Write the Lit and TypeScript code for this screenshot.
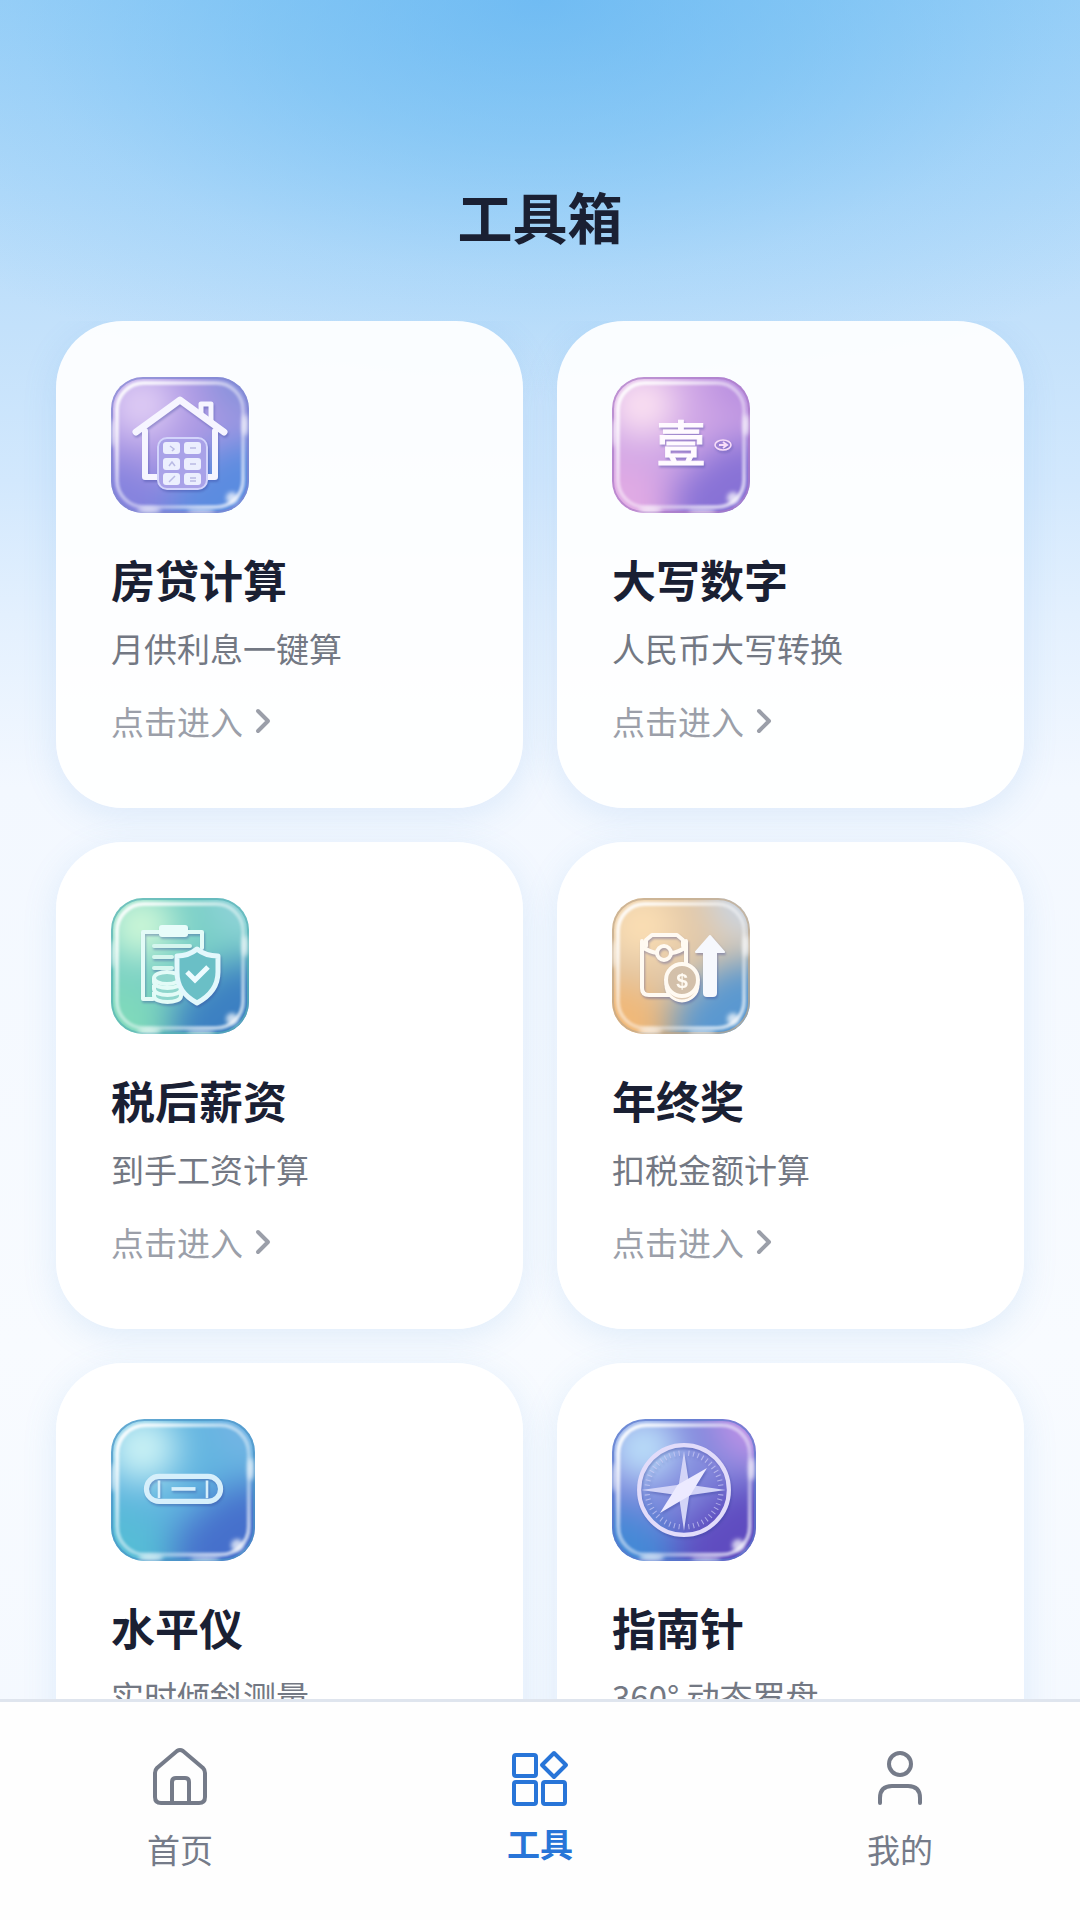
import { LitElement, html, svg, css } from "lit";
import { customElement, property } from "lit/decorators.js";

interface Tool { id: string; name: string; desc: string; big?: boolean; }

const TOOLS: Tool[] = [
  { id: "house", name: "房贷计算", desc: "月供利息一键算" },
  { id: "caps", name: "大写数字", desc: "人民币大写转换" },
  { id: "tax", name: "税后薪资", desc: "到手工资计算" },
  { id: "bonus", name: "年终奖", desc: "扣税金额计算" },
  { id: "level", name: "水平仪", desc: "实时倾斜测量", big: true },
  { id: "compass", name: "指南针", desc: "360° 动态罗盘", big: true },
];

/* Colours of each glass tile: middle, top left, top right, bottom left, bottom right, rim */
const TILES: Record<string, string[]> = {
  house: ["#ae9ae4", "#e0cdf5", "#8792dc", "#8583de", "#5b8ce0", "#8088d2"],
  caps: ["#cfa6e6", "#fce2f2", "#b990e0", "#e0aae4", "#8872d6", "#ab7cc8"],
  tax: ["#79cfc6", "#cff8d8", "#8fd2d8", "#7fd9bb", "#3c80c2", "#5ab2b6"],
  bonus: ["#e2c8a8", "#fcdfb4", "#c9d4e2", "#f0b878", "#5a98d0", "#bfa88c"],
  level: ["#62b5e0", "#cef4f6", "#74b4e4", "#56bcd6", "#4670cc", "#4c94c6"],
  compass: ["#8088dc", "#bce0fa", "#bc90e6", "#4489d6", "#5f4cc0", "#5a78cc"],
};

const compassTicks = Array.from({ length: 48 }, (_, i) => i).filter((i) => i % 12 !== 0);

function glyph(id: string) {
  switch (id) {
    case "house":
      return svg`
        <g fill="none" stroke="#f6f5ff" stroke-linejoin="round" stroke-linecap="round">
          <path d="M25 55 L69 23 L113 55" stroke-width="7"/>
          <path d="M90 36 V27 H100 V45" stroke-width="5"/>
          <path d="M34 54 V100 H104 V54" stroke-width="6"/>
        </g>
        <rect x="47" y="61" width="49" height="51" rx="9" fill="#a9a2e8" stroke="#d3d4fb" stroke-width="2"/>
        <g fill="#eceffe">
          <rect x="52" y="65" width="17" height="12" rx="3"/><rect x="73" y="65" width="17" height="12" rx="3"/>
          <rect x="52" y="81" width="17" height="12" rx="3"/><rect x="73" y="81" width="17" height="12" rx="3"/>
          <rect x="52" y="96" width="17" height="12" rx="3"/><rect x="73" y="96" width="17" height="12" rx="3"/>
        </g>
        <path fill="none" stroke="#b9bae4" stroke-width="1.5" d="M59 69l4 3-2 2M79 71h6M58 89l3-4 3 4M79 87h6M58 105l6-6M79 101h6M79 104h6"/>`;
    case "caps":
      return svg`
        <text class="glyph" x="69" y="85" text-anchor="middle">壹</text>
        <g fill="none" stroke="#f8ddf8" stroke-width="1.6">
          <ellipse cx="111" cy="68" rx="8" ry="5"/>
          <path d="M107 68h7M111 65l4 3-4 3" stroke-width="2"/>
        </g>`;
    case "tax":
      return svg`
        <path d="M48 34 H32 V101 H42 M76 34 H91 V50" fill="none" stroke="#e3fbf7" stroke-width="4" stroke-linejoin="round" stroke-linecap="round"/>
        <path d="M43 48h36M43 59h18M43 70h18" stroke="#d5f6ee" stroke-width="4" stroke-linecap="round"/>
        <rect x="48" y="27" width="29" height="12" rx="3" fill="#e8fcfa"/>
        <g fill="#8fd6cd" stroke="#e3fbf7" stroke-width="4">
          <path d="M43 94v4c0 8 27 8 27 0v-4"/>
          <path d="M43 87v4c0 8 27 8 27 0v-4"/>
          <path d="M43 80v4c0 8 27 8 27 0v-4"/>
          <ellipse cx="56" cy="80" rx="13" ry="6"/>
        </g>
        <path d="M86 51 C80 56 73 58 66 58 V74 C66 89 73 98 86 105 C99 98 107 89 107 74 V58 C100 58 92 56 86 51Z" fill="#6abfc6" stroke="#e3f8fc" stroke-width="5" stroke-linejoin="round"/>
        <path d="M76 74 L84 82 L97 69" fill="none" stroke="#eefcff" stroke-width="5"/>`;
    case "bonus":
      return svg`
        <g fill="none" stroke="#fffaf2" stroke-width="4" stroke-linejoin="round" stroke-linecap="round">
          <path d="M34 48V42L40 37H65L71 42V48"/>
          <path d="M30 43V90q0 7 7 7h30q7 0 7-7V43"/>
          <path d="M30 49q8 5 15 6M74 49q-7 5-14 6"/>
          <circle cx="52" cy="55" r="7"/>
        </g>
        <path d="M98 38 L112 54 H104 V95 q0 3-3 3 h-6 q-3 0-3-3 V54 H84Z" fill="#f6f8fd" stroke="#f6f8fd" stroke-width="2" stroke-linejoin="round"/>
        <circle cx="70" cy="87" r="16" fill="#dfcab3" stroke="#fffaf2" stroke-width="3"/>
        <circle cx="70" cy="82" r="16" fill="#d3c0aa" stroke="#fffaf2" stroke-width="4"/>
        <text class="dollar" x="70" y="90" text-anchor="middle">$</text>`;
    case "level":
      return svg`
        <g fill="none" stroke="#d6effb">
          <rect x="34" y="55" width="71" height="24" rx="12" stroke-width="5"/>
          <path d="M46 59v17M92 59v17" stroke-width="2.5"/>
          <path d="M58 67h23" stroke-width="3.5"/>
        </g>`;
    default:
      return svg`
        <circle cx="69" cy="68" r="43" fill="none" stroke="#e2dcfa" stroke-width="4"/>
        ${compassTicks.map((i) => svg`<path d="M69 30v5" stroke="#cfcdf5" stroke-opacity="0.7" stroke-width="1" transform="rotate(${i * 7.5} 69 68)"/>`)}
        <path d="M69 31 L74 63 L109 68 L74 73 L69 107 L64 73 L28 68 L64 63Z" fill="#d3d4f7"/>
        <path d="M91 47 L75 73 L46 90 L63 63Z" fill="#eceaff"/>`;
  }
}

@customElement("tool-icon")
class ToolIcon extends LitElement {
  @property() kind = "house";
  static styles = css`
    :host { display: block; width: 138px; }
    :host([large]) { width: 144px; }
    svg { display: block; width: 100%; height: auto; overflow: visible; }
    .glyph { font: 500 49px "Noto Sans CJK SC", sans-serif; fill: #fffaff; stroke: #fffaff; stroke-width: 1px; }
    .dollar { font: 700 21px "Liberation Sans", sans-serif; fill: #fffaf2; }
    .mark { filter: drop-shadow(1px 2px 1px rgba(50, 60, 150, 0.35)); }
  `;
  render() {
    const [mid, tl, tr, bl, br, rim] = TILES[this.kind];
    return html`<svg viewBox="0 0 138 136" aria-hidden="true">
      <defs>
        <linearGradient id="edge" x1="0" y1="0" x2="1" y2="1">
          <stop offset="0" stop-color="#fff" stop-opacity="0.95"/><stop offset="0.4" stop-color="#fff" stop-opacity="0.5"/>
          <stop offset="0.65" stop-color="#fff" stop-opacity="0.35"/><stop offset="1" stop-color="#fff" stop-opacity="0.7"/>
        </linearGradient>
        <filter id="blend" filterUnits="userSpaceOnUse" x="-80" y="-80" width="300" height="300" color-interpolation-filters="sRGB"><feGaussianBlur stdDeviation="17"/></filter>
        <filter id="soft" x="-10%" y="-10%" width="120%" height="120%"><feGaussianBlur stdDeviation="1"/></filter>
        <filter id="spark" x="-20%" y="-20%" width="140%" height="140%"><feGaussianBlur stdDeviation="2"/></filter>
        <clipPath id="clip"><rect width="138" height="136" rx="32"/></clipPath>
      </defs>
      <g clip-path="url(#clip)">
        <g filter="url(#blend)">
          <rect x="-80" y="-80" width="300" height="300" fill=${mid}/>
          <path d="M75 -80 H220 V40 H110Z" fill=${tr}/>
          <path d="M-80 75 L20 85 L65 115 V220 H-80Z" fill=${bl}/>
          <path d="M220 55 L110 65 L60 110 V220 H220Z" fill=${br}/>
          <ellipse cx="30" cy="28" rx="34" ry="32" fill=${tl}/>
        </g>
        <rect x="6" y="6" width="126" height="124" rx="27" fill="none" stroke="url(#edge)" stroke-width="4" filter="url(#soft)"/>
        <rect x="1" y="1" width="136" height="134" rx="31" fill="none" stroke=${rim} stroke-width="2" stroke-opacity="0.7"/>
        <g fill="#fff" fill-opacity="0.7" filter="url(#spark)">
          <ellipse cx="2" cy="56" rx="2" ry="14"/><ellipse cx="134" cy="48" rx="3" ry="11"/>
          <ellipse cx="38" cy="133" rx="12" ry="3"/><ellipse cx="90" cy="134" rx="14" ry="2"/>
          <circle cx="121" cy="121" r="6"/>
        </g>
      </g>
      <g class="mark">${glyph(this.kind)}</g>
    </svg>`;
  }
}

const NAV = [
  { label: "首页", icon: svg`<path d="M3 23 V47 Q3 53 9 53 H47 Q53 53 53 47 V23 Q53 20 51 18 L31 1 Q28 -1 25 1 L5 18 Q3 20 3 23Z M20 53 V32 Q20 28 24 28 H33 Q37 28 37 32 V53"/>` },
  { label: "工具", active: true, icon: svg`<rect x="2" y="5" width="22" height="21" rx="2"/><rect x="2" y="32" width="22" height="22" rx="2"/><rect x="31" y="32" width="22" height="22" rx="2"/><path d="M42 3 L54 15 L42 27 L30 15Z"/>` },
  { label: "我的", icon: svg`<circle cx="28" cy="14" r="11"/><path d="M8 53 V48 Q8 36 20 36 H36 Q48 36 48 48 V53"/>` },
];

@customElement("app-root")
class AppRoot extends LitElement {
  static styles = css`
    :host {
      display: flex; flex-direction: column; height: 100vh; overflow: hidden;
      font-family: "Noto Sans CJK SC", sans-serif; color: #1a2033;
      background:
        radial-gradient(ellipse 72% 21% at 50% 0, rgba(84, 174, 240, 0.62), rgba(92, 180, 240, 0.45) 35%, rgba(110, 188, 243, 0.2) 68%, rgba(130, 198, 246, 0) 100%),
        linear-gradient(180deg, #9ed2f8 0, #b4dbfa 10%, #c3e1fb 17%, #d2e8fd 25%, #e3f0fe 32%, #f3f8ff 41%, #f8fbff 70%, #f3f8ff 100%);
    }
    * { box-sizing: border-box; }
    header { padding: 175px 56px 66px; text-align: center; }
    h1 { margin: 0; font-size: 55px; line-height: 80px; font-weight: 700; }
    main { flex: 1; min-height: 0; overflow: hidden; }
    .grid { display: grid; grid-template-columns: 1fr 1fr; gap: 34px; padding: 0 56px; }
    .card {
      display: flex; flex-direction: column; align-items: flex-start;
      padding: 56px 55px 63px; border-radius: 67px;
      background: rgba(255, 255, 255, 0.92); color: inherit; text-decoration: none;
      box-shadow: 0 8px 34px rgba(90, 155, 220, 0.15);
    }
    h2 { margin: 33px 0 0; font-size: 44px; line-height: 66px; font-weight: 700; }
    .desc { margin: 12px 0 0; font-size: 33px; line-height: 48px; color: #737883; }
    .enter { display: flex; align-items: center; gap: 12px; margin-top: 25px; font-size: 33px; line-height: 48px; color: #9b9fa9; }
    .enter svg { width: 16px; height: 26px; }
    nav { display: flex; height: 221px; border-top: 3px solid #dfe5ee; background: #fefefe; }
    .tab {
      flex: 1; display: flex; flex-direction: column; align-items: center; gap: 19px;
      padding-top: 48px; border: 0; background: none; font: inherit; font-size: 33px; line-height: 48px; color: #757b89;
    }
    .tab svg { width: 56px; height: 56px; flex: none; overflow: visible; }
    .active { color: #2875d8; font-weight: 700; gap: 13px; }
  `;
  render() {
    return html`
      <header><h1>工具箱</h1></header>
      <main><div class="grid">
        ${TOOLS.map((t) => html`<a class="card" href="#${t.id}">
          <tool-icon .kind=${t.id} ?large=${t.big}></tool-icon>
          <h2>${t.name}</h2>
          <p class="desc">${t.desc}</p>
          <span class="enter">点击进入<svg viewBox="0 0 16 26" fill="none" stroke="currentColor" stroke-width="4" stroke-linecap="round" stroke-linejoin="round" aria-hidden="true"><path d="M3 3l10 10L3 23"/></svg></span>
        </a>`)}
      </div></main>
      <nav>
        ${NAV.map((n) => html`<button type="button" class="tab ${n.active ? "active" : ""}">
          <svg viewBox="0 0 56 56" fill="none" stroke="currentColor" stroke-width="4" stroke-linejoin="round" stroke-linecap="round" aria-hidden="true">${n.icon}</svg>
          <span>${n.label}</span></button>`)}
      </nav>`;
  }
}
